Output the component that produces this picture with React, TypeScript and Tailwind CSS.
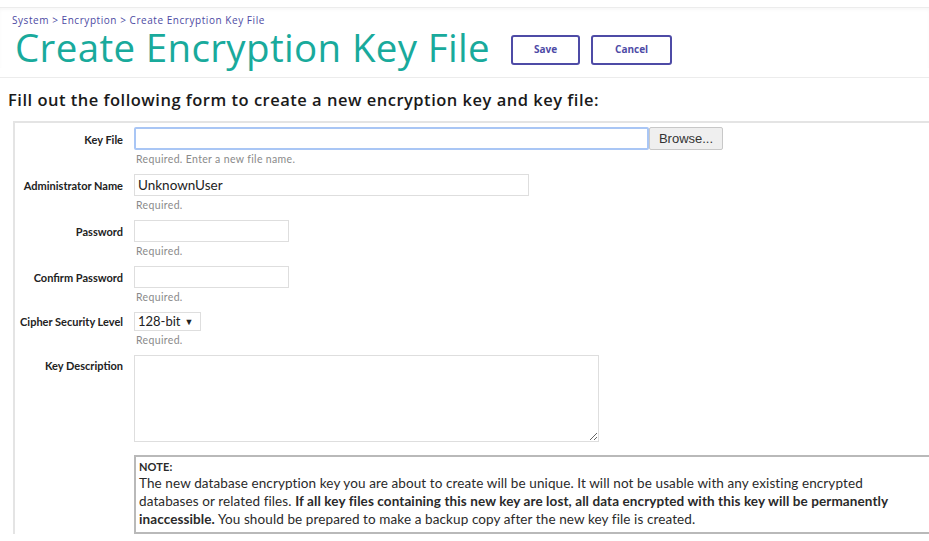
const labelCls =
  'w-[119px] shrink-0 text-right pr-[11px] text-[11px] font-bold text-[#222] tracking-[0px]';
const hintCls = 'text-[10.5px] leading-[13px] text-[#8a8a8a] mt-[3px] ml-[2px] tracking-[0.35px]';

function Field({
  label,
  hint,
  children,
  labelPad = 'pt-[4px]',
}: {
  label: string;
  hint?: string;
  children: React.ReactNode;
  labelPad?: string;
}) {
  return (
    <div className="flex">
      <div className={`${labelCls} ${labelPad}`}>{label}</div>
      <div className="flex flex-col">
        {children}
        {hint && <div className={hintCls}>{hint}</div>}
      </div>
    </div>
  );
}

export default function App() {
  return (
    <div className="w-[929px] h-[541px] overflow-hidden bg-white font-['Lato',sans-serif] text-[#222]">
      <div className="border-t border-[#ececec] mt-[7px] pt-[6px] px-[12px] shadow-[inset_0_2px_3px_rgba(0,0,0,0.03)]">
        <div className="text-[10px] leading-[12px] text-[#4d4aa3] tracking-[0.55px] font-['Open_Sans',sans-serif]">
          System &gt; Encryption &gt; Create Encryption Key File
        </div>
        <div className="flex items-center gap-[21px] pl-[3px]">
          <h1 className="text-[38.5px] leading-[42px] text-[#19aa9c] font-['Open_Sans',sans-serif] tracking-[0.35px]">
            Create Encryption Key File
          </h1>
          <div className="flex gap-[11px] mt-[5px]">
            <button className="w-[69px] h-[30px] border-2 border-[#4e4ba6] rounded-[3px] text-[10px] font-bold text-[#4e4ba6] bg-white font-['Open_Sans',sans-serif]">
              Save
            </button>
            <button className="w-[81px] h-[30px] border-2 border-[#4e4ba6] rounded-[3px] text-[10px] font-bold text-[#4e4ba6] bg-white font-['Open_Sans',sans-serif]">
              Cancel
            </button>
          </div>
        </div>
      </div>
      <div className="border-t border-[#ececec] mt-[9px] pt-[12px] pl-[8px]">
        <p className="text-[16.5px] leading-[20px] font-semibold text-[#1a1a1a] font-['Open_Sans',sans-serif] tracking-[0.5px]">
          Fill out the following form to create a new encryption key and key file:
        </p>
      </div>

      <div className="ml-[13px] mt-[11px] border-t-2 border-l-2 border-[#e4e4e4] pt-[4px] flex flex-col gap-[8px]">
        <Field label="Key File" hint="Required. Enter a new file name." labelPad="pt-[5px]">
          <div className="flex">
            <input className="w-[515px] h-[23px] border-2 border-[#a9c6f5] rounded-[2px] outline-none px-[3px] text-[13px]" />
            <button className="w-[74px] h-[23px] border border-[#c8c8c8] bg-[#efefef] rounded-[2px] text-[13px] text-[#333] font-['Liberation_Sans',sans-serif]">
              Browse...
            </button>
          </div>
        </Field>
        <Field label="Administrator Name" hint="Required.">
          <input
            defaultValue="UnknownUser"
            className="w-[395px] h-[22px] border border-[#dedede] outline-none px-[3px] text-[13.5px] text-[#222]"
          />
        </Field>
        <Field label="Password" hint="Required.">
          <input type="password" className="w-[155px] h-[22px] border border-[#dedede] outline-none" />
        </Field>
        <Field label="Confirm Password" hint="Required.">
          <input type="password" className="w-[155px] h-[22px] border border-[#dedede] outline-none" />
        </Field>
        <Field label="Cipher Security Level" hint="Required." labelPad="pt-[2px]">
          <div className="w-[67px] h-[19px] border border-[#dedede] flex items-center px-[3px] text-[13px] text-[#222]">
            128-bit <span className="text-[9px] ml-[4px]">▼</span>
          </div>
        </Field>
        <Field label="Key Description" labelPad="pt-[3px]">
          <textarea className="w-[465px] h-[87px] border border-[#dedede] outline-none resize" />
        </Field>
        <div className="ml-[119px] mt-[5px] border-2 border-[#b9b9b9] border-r-0 px-[3px] pt-[2px] pb-[4px] text-[13.5px] leading-[18px] tracking-[0.1px] text-[#2a2a2a]">
          <div className="font-bold text-[11px] leading-[15px]">NOTE:</div>
          <p className="w-[760px]">
            The new database encryption key you are about to create will be unique. It will not be usable
            with any existing encrypted databases or related files.{' '}
            <b>
              If all key files containing this new key are lost, all data encrypted with this key will be
              permanently inaccessible.
            </b>{' '}
            You should be prepared to make a backup copy after the new key file is created.
          </p>
        </div>
      </div>
    </div>
  );
}
